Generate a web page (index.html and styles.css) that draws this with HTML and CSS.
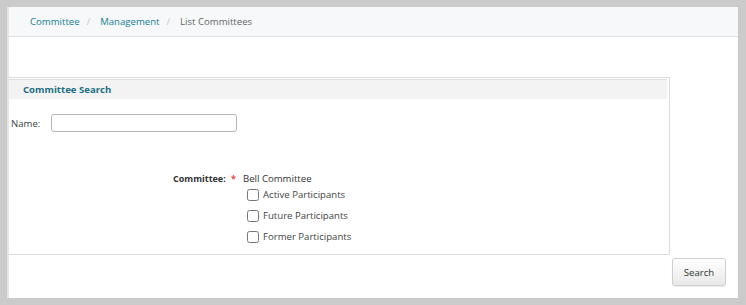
FILE: index.html
```html
<!DOCTYPE html>
<html lang="en">
<head>
  <meta charset="UTF-8">
  <title>List Committees</title>
  <link rel="stylesheet" href="styles.css">
</head>
<body>
  <div class="page">
    <!-- Breadcrumb -->
    <div class="breadcrumb">
      <a href="#">Committee</a>
      <span class="sep">/</span>
      <a href="#">Management</a>
      <span class="sep">/</span>
      <span class="current">List Committees</span>
    </div>

    <!-- Search panel -->
    <div class="panel">
      <div class="panel-head">Committee Search</div>

      <div class="name-row">
        <label for="name">Name:</label>
        <input type="text" id="name" name="name">
      </div>

      <div class="committee-row">
        <div class="field-label">Committee: <span class="req">*</span></div>
        <div class="field-value">
          <div>Bell Committee</div>
          <label class="check"><input type="checkbox"> Active Participants</label>
          <label class="check"><input type="checkbox"> Future Participants</label>
          <label class="check"><input type="checkbox"> Former Participants</label>
        </div>
      </div>
    </div>

    <div class="actions">
      <button type="button" class="search-btn">Search</button>
    </div>
  </div>
</body>
</html>
```

FILE: styles.css
```css
/* Page frame */
body {
  margin: 0;
  padding: 7px 8px 7px 7px;
  background: #cbcbcb;
  font-family: 'Open Sans', 'Liberation Sans', sans-serif;
  font-size: 9.6px;
  color: #333;
}

.page {
  height: 291px;
  background: white;
  border-left: 2px solid #e6e6e6;
  box-sizing: border-box;
}

/* Breadcrumb bar */
.breadcrumb {
  height: 29px;
  background: #f7f8fa;
  border-bottom: 1px solid #dfe1e5;
  padding-left: 21px;
  display: flex;
  align-items: center;
}

.breadcrumb a {
  color: #14808f;
  text-decoration: none;
}

.breadcrumb .sep {
  color: #c4c4c4;
  margin: 0 10px 0 7px;
}

.breadcrumb .current {
  color: #666;
}

/* Search panel */
.panel {
  margin: 40px 68px 0 0;
  padding: 1px 2px 0 0;
  border: 1px solid #dcdcdc;
  border-left: none;
  height: 178px;
  box-sizing: border-box;
}

.panel-head {
  height: 19px;
  line-height: 19px;
  background: #f3f3f3;
  border-top: 1px solid #dedede;
  padding-left: 14px;
  font-weight: 700;
  color: #1b6e82;
}

.name-row {
  display: flex;
  align-items: center;
  margin-top: 15px;
  padding-left: 2px;
}

.name-row label {
  width: 40px;
  color: #444;
}

.name-row input {
  width: 186px;
  height: 18px;
  box-sizing: border-box;
  border: 1px solid #b5b5b5;
  border-radius: 3px;
  padding: 0 4px;
  margin: 0;
}

.committee-row {
  display: flex;
  margin-top: 39px;
}

.field-label {
  width: 229px;
  text-align: right;
  font-weight: 700;
  font-size: 9px;
  line-height: 16px;
  color: #333;
  padding-right: 2px;
  box-sizing: border-box;
}

.req {
  color: #e8443a;
  margin-left: 3px;
}

.field-value {
  padding-left: 5px;
  line-height: 16px;
  color: #333;
}

.check {
  display: flex;
  align-items: center;
  margin-top: 5px;
  margin-left: 4px;
  color: #444;
}

.check:first-of-type {
  margin-top: 0;
}

.check input {
  width: 12px;
  height: 12px;
  margin: 0 4px 0 0;
}

/* Bottom actions */
.actions {
  display: flex;
  justify-content: flex-end;
  padding: 3px 12px 0 0;
}

.search-btn {
  width: 54px;
  height: 28px;
  font-family: inherit;
  font-size: 9.6px;
  color: #333;
  background: linear-gradient(#ffffff, #e8e8e8);
  border: 1px solid #cfcfcf;
  border-radius: 3px;
  box-shadow: 0 1px 1px rgba(0, 0, 0, 0.08);
  cursor: pointer;
}
```
